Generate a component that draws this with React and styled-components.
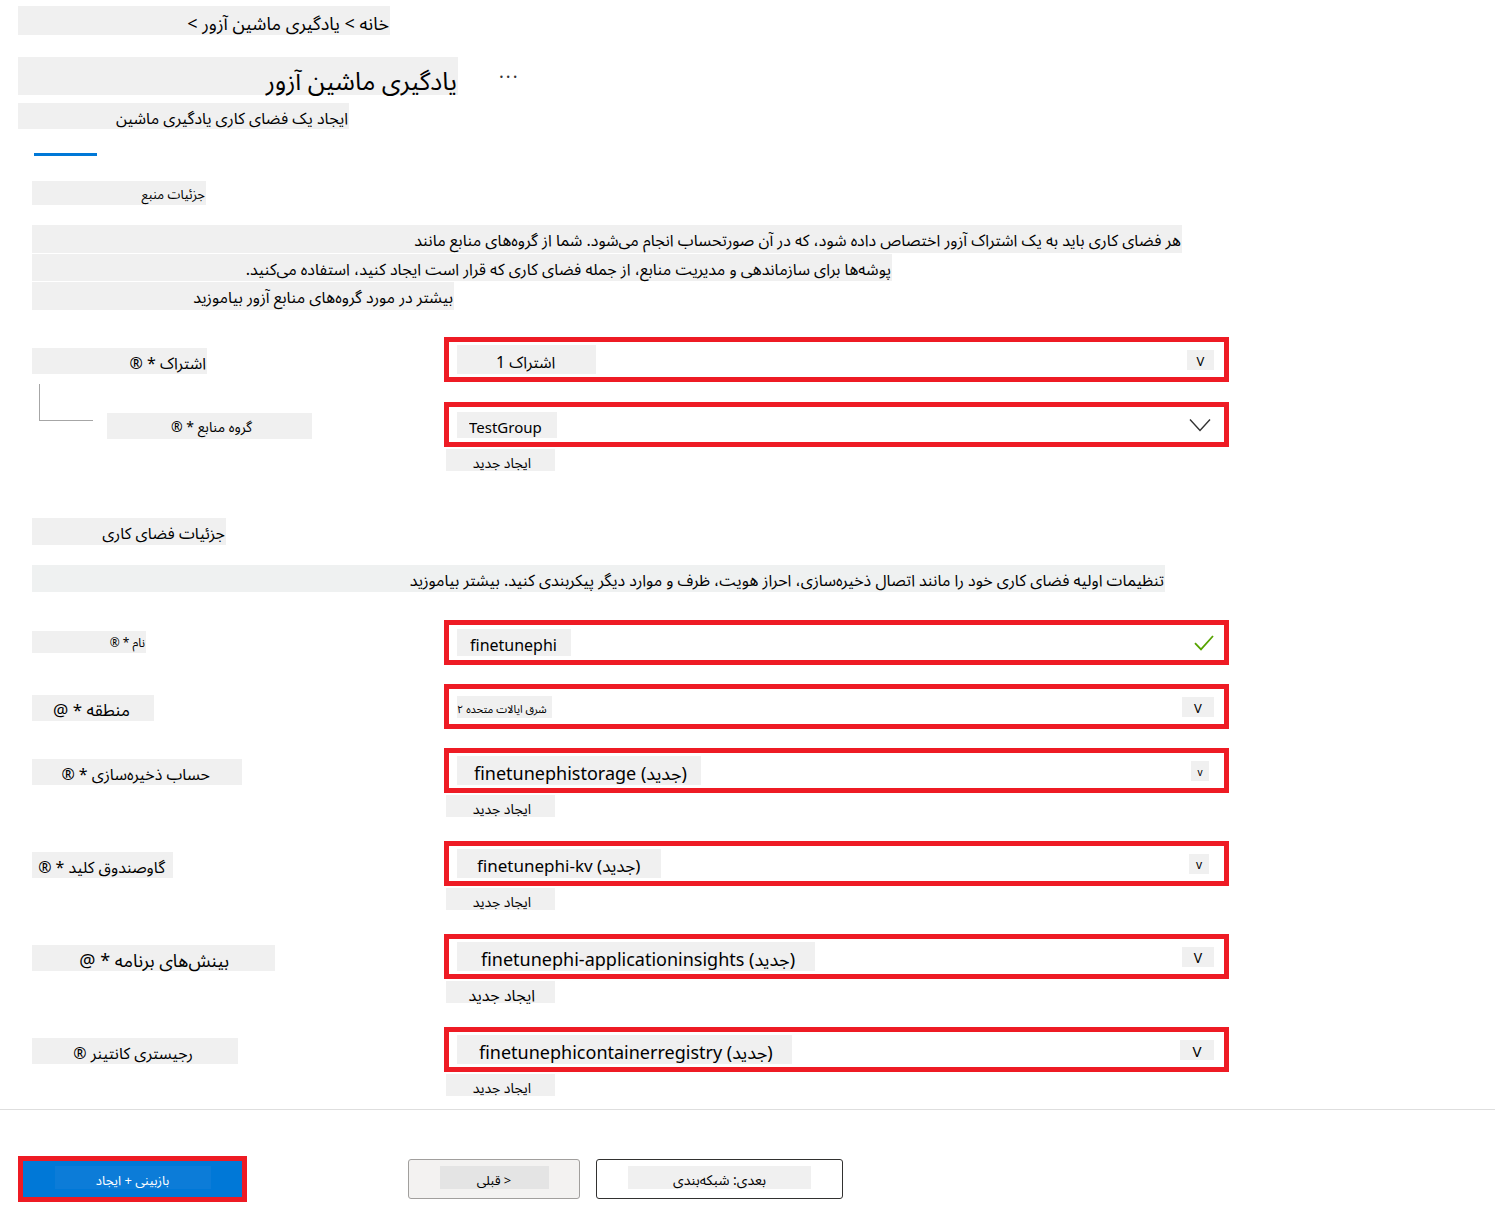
import React from "react";
import styled, { createGlobalStyle } from "styled-components";

const Global = createGlobalStyle`
  * { box-sizing: border-box; }
  body { margin: 0; background: #fff; color: #000; }
  body, button, input, select { font-family: "Noto Sans", "Noto Sans Arabic", "DejaVu Sans", sans-serif; }
  h1, h2, p { margin: 0; font-weight: 400; }
  a { color: inherit; text-decoration: none; }
`;

const Page = styled.div`
  width: 100%;
  padding-top: 6px;
`;

const Header = styled.header`
  display: flex;
  flex-direction: column;
  padding-left: 18px;
`;

const Strip = styled.div`
  direction: rtl;
  width: ${(p) => p.$w}px;
  max-width: 100%;
  height: ${(p) => p.$h || 26}px;
  padding: ${(p) => p.$top ?? 3}px ${(p) => p.$end ?? 1}px 0 0;
  background: ${(p) => p.$bg || "#f0f0f0"};
  font-size: ${(p) => p.$size || 16}px;
  line-height: 24px;
  white-space: nowrap;
`;

const TitleRow = styled.div`
  display: flex;
  align-items: flex-start;
  gap: 41px;
  margin: 22px 0 8px;
`;

const MoreButton = styled.button`
  margin-top: 4px;
  border: 0;
  padding: 0;
  background: none;
  font-size: 18px;
  line-height: 20px;
  letter-spacing: 2px;
  color: #333;
`;

const TabMark = styled.div`
  width: 63px;
  height: 3px;
  margin: 24px 0 25px 16px;
  background: #0078d7;
`;

const Main = styled.main`
  padding-left: 32px;
`;

const Intro = styled.div`
  display: flex;
  flex-direction: column;
  gap: 1px;
  margin: 20px 0 ${(p) => p.$after}px;
`;

const SectionTitle = styled(Strip)`
  margin-top: 42px;
`;

const Fields = styled.div`
  display: flex;
  flex-direction: column;
  gap: ${(p) => p.$gap}px;
`;

const Row = styled.div`
  display: grid;
  grid-template-columns: 412px minmax(0, 785px);
  padding-right: 32px;
  margin-bottom: ${(p) => (p.$link ? 5 : 0)}px;
`;

const LabelCell = styled.div`
  display: flex;
  align-items: flex-start;
  padding-top: 11px;
`;

const Branch = styled.div`
  width: 54px;
  height: 37px;
  margin: -29px 14px 0 7px;
  border-left: 1px solid #a6a6a6;
  border-bottom: 1px solid #a6a6a6;
`;

const Box = styled.div`
  display: flex;
  align-items: center;
  justify-content: space-between;
  height: 45px;
  padding: 0 10px 0 8px;
  border: 5px solid #ee1b24;
`;

const valueLook = `
  appearance: none;
  border: 0;
  border-radius: 0;
  margin: 0;
  outline: 0;
  background: #f0f0f0;
  color: #000;
`;

const Select = styled.select`
  ${valueLook}
  width: ${(p) => p.$w}px;
  height: ${(p) => p.$h || 29}px;
  padding: 4px 0 0 ${(p) => p.$pad}px;
  font-size: ${(p) => p.$size}px;
`;

const TextInput = styled.input`
  ${valueLook}
  width: 114px;
  height: 27px;
  padding: 5px 0 0 13px;
  font-size: 16px;
`;

const Arrow = styled.span`
  width: ${(p) => p.$w}px;
  height: 20px;
  margin-right: ${(p) => p.$end || 0}px;
  padding-top: 3px;
  background: #f0f0f0;
  font-size: ${(p) => p.$size}px;
  line-height: 16px;
  text-align: center;
`;

const CreateLink = styled.a`
  display: block;
  direction: rtl;
  width: 109px;
  height: 22px;
  margin: 2px 0 0 2px;
  padding: 3px ${(p) => p.$end}px 0 0;
  background: #f0f0f0;
  font-size: ${(p) => p.$size}px;
  line-height: 22px;
  white-space: nowrap;
`;

const Footer = styled.footer`
  display: flex;
  align-items: center;
  margin-top: 8px;
  padding: 46px 18px 8px;
  border-top: 1px solid #dedede;
`;

const FooterButton = styled.button`
  direction: rtl;
  display: flex;
  justify-content: center;
  align-items: center;
  width: ${(p) => p.$w}px;
  height: 40px;
  margin-left: ${(p) => p.$gap || 0}px;
  padding: 0 0 3px;
  border: 1px solid ${(p) => p.$line};
  border-radius: 3px;
  background: ${(p) => p.$bg};
  color: #000;
`;

const PrimaryButton = styled(FooterButton)`
  height: 46px;
  border: 5px solid #ee1b24;
  border-radius: 0;
  color: #fff;
`;

const Caption = styled.span`
  width: ${(p) => p.$w}px;
  height: 23px;
  padding-top: 3px;
  background: ${(p) => p.$bg};
  font-size: ${(p) => p.$size || 13}px;
  line-height: 22px;
`;

const ChevronBox = styled.svg`
  margin-right: 3px;
`;

const ChevronDown = () => (
  <ChevronBox width="22" height="14" viewBox="0 0 22 14" fill="none" stroke="#333" strokeWidth="1.4" aria-hidden="true">
    <path d="M1 1.5 11 12.5 21 1.5" />
  </ChevronBox>
);

const Check = () => (
  <svg width="20" height="16" viewBox="0 0 20 16" fill="none" stroke="#57a300" strokeWidth="1.8" aria-hidden="true">
    <path d="M1 8.2 7 14.4 19 1" />
  </svg>
);

function Field({ id, label, lab, branch, value, val, arrow, text, chevron, link }) {
  return (
    <Row $link={Boolean(link)}>
      <LabelCell>
        {branch && <Branch />}
        <Strip as="label" htmlFor={id} $w={lab.w} $h={lab.h} $end={lab.end} $size={lab.size} $top={lab.top}>
          {label}
        </Strip>
      </LabelCell>
      <div>
        <Box>
          {text ? (
            <TextInput id={id} defaultValue={value} />
          ) : (
            <Select id={id} $w={val.w} $pad={val.pad} $size={val.size} $h={val.h}>
              <option>{value}</option>
            </Select>
          )}
          {text && <Check />}
          {chevron && <ChevronDown />}
          {arrow && (
            <Arrow aria-hidden="true" $w={arrow.w} $size={arrow.size} $end={arrow.end}>
              {arrow.char || "V"}
            </Arrow>
          )}
        </Box>
        {link && (
          <CreateLink href="#" $size={link} $end={link > 14 ? 20 : 24}>
            ایجاد جدید
          </CreateLink>
        )}
      </div>
    </Row>
  );
}

export default function App() {
  return (
    <Page>
      <Global />
      <Header>
        <Strip as="nav" $w={372} $h={29} $top={5} $size={18}>
          <a href="#">خانه</a> &gt; <a href="#">یادگیری ماشین آزور</a> &gt;
        </Strip>
        <TitleRow>
          <Strip as="h1" $w={440} $h={38} $top={11} $size={25}>
            یادگیری ماشین آزور
          </Strip>
          <MoreButton aria-label="بیشتر">...</MoreButton>
        </TitleRow>
        <Strip as="p" $w={331} $size={16}>
          ایجاد یک فضای کاری یادگیری ماشین
        </Strip>
        <TabMark />
      </Header>
      <Main>
        <Strip as="h2" $w={174} $h={24} $top={1} $size={13}>
          جزئیات منبع
        </Strip>
        <Intro $after={27}>
          <Strip as="p" $w={1150} $h={28} $size={16}>
            هر فضای کاری باید به یک اشتراک آزور اختصاص داده شود، که در آن صورتحساب انجام می‌شود. شما از گروه‌های منابع مانند
          </Strip>
          <Strip as="p" $w={860} $h={27} $size={16}>
            پوشه‌ها برای سازماندهی و مدیریت منابع، از جمله فضای کاری که قرار است ایجاد کنید، استفاده می‌کنید.
          </Strip>
          <Strip as="a" href="#" $w={422} $h={28} $size={16}>
            بیشتر در مورد گروه‌های منابع آزور بیاموزید
          </Strip>
        </Intro>
        <Fields $gap={20}>
          <Field id="subscription" label="اشتراک * ®" lab={{ w: 175, end: 1, size: 16 }} value="اشتراک 1" val={{ w: 139, pad: 39, size: 16 }} arrow={{ w: 27, size: 13 }} />
          <Field id="group" branch label="گروه منابع * ®" lab={{ w: 205, end: 60, size: 14, top: 2 }} value="TestGroup" val={{ w: 100, pad: 12, size: 15, h: 26 }} chevron link={14} />
        </Fields>
        <SectionTitle as="h2" $w={194} $h={27} $size={16}>
          جزئیات فضای کاری
        </SectionTitle>
        <Intro $after={28}>
          <Strip as="p" $w={1133} $h={27} $size={16} $bg="#eff1f1">
            تنظیمات اولیه فضای کاری خود را مانند اتصال ذخیره‌سازی، احراز هویت، ظرف و موارد دیگر پیکربندی کنید. <a href="#">بیشتر بیاموزید</a>
          </Strip>
        </Intro>
        <Fields $gap={19}>
          <Field id="name" label="نام * ®" lab={{ w: 114, h: 22, end: 1, size: 12, top: 0 }} value="finetunephi" text />
          <Field id="region" label="منطقه * @" lab={{ w: 122, end: 24, size: 17 }} value="شرق ایالات متحده ۲" val={{ w: 95, pad: 0, size: 11, h: 22 }} arrow={{ w: 32, size: 13 }} />
          <Field id="storage" label="حساب ذخیره‌سازی * ®" lab={{ w: 210, end: 32, size: 16 }} value="finetunephistorage (جدید)" val={{ w: 244, pad: 17, size: 18 }} arrow={{ w: 18, size: 10, char: "v", end: 5 }} link={14} />
          <Field id="vault" label="گاوصندوق کلید * ®" lab={{ w: 141, end: 8, size: 16 }} value="finetunephi-kv (جدید)" val={{ w: 204, pad: 20, size: 17 }} arrow={{ w: 20, size: 12, char: "v", end: 5 }} link={14} />
          <Field id="insights" label="بینش‌های برنامه * @" lab={{ w: 243, end: 46, size: 18 }} value="finetunephi-applicationinsights (جدید)" val={{ w: 358, pad: 24, size: 18 }} arrow={{ w: 32, size: 14 }} link={16} />
          <Field id="registry" label="رجیستری کانتینر ®" lab={{ w: 206, end: 45, size: 16 }} value="finetunephicontainerregistry (جدید)" val={{ w: 335, pad: 22, size: 18 }} arrow={{ w: 34, size: 15 }} link={14} />
        </Fields>
      </Main>
      <Footer>
        <PrimaryButton $w={229} $bg="#0078d7">
          <Caption $w={156} $bg="#0c7cd8">بازبینی + ایجاد</Caption>
        </PrimaryButton>
        <FooterButton $w={172} $gap={161} $bg="#f3f2f1" $line="#a19f9d">
          <Caption $w={109} $bg="#e4e4e4">&lt; قبلی</Caption>
        </FooterButton>
        <FooterButton $w={247} $gap={16} $bg="#fff" $line="#323130">
          <Caption $w={183} $bg="#f0f0f0" $size={14}>بعدی: شبکه‌بندی</Caption>
        </FooterButton>
      </Footer>
    </Page>
  );
}
